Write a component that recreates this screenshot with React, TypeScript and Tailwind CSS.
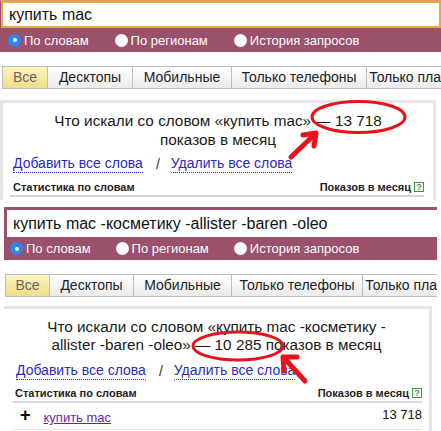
import React from 'react';

type Tab = { label: string; w: string; active?: boolean };

const tabsTop: Tab[] = [
  { label: 'Все', w: 'w-[46px]', active: true },
  { label: 'Десктопы', w: 'w-[85px]' },
  { label: 'Мобильные', w: 'w-[99px]' },
  { label: 'Только телефоны', w: 'w-[135px]' },
  { label: 'Только планшеты', w: 'w-[120px]' },
];

const tabsBottom: Tab[] = [
  { label: 'Все', w: 'w-[45px]', active: true },
  { label: 'Десктопы', w: 'w-[84px]' },
  { label: 'Мобильные', w: 'w-[98px]' },
  { label: 'Только телефоны', w: 'w-[131px]' },
  { label: 'Только планшеты', w: 'w-[120px]' },
];

const Radio = ({ checked, label }: { checked?: boolean; label: string }) => (
  <div className="flex items-center">
    {checked ? (
      <span className="w-[13px] h-[13px] rounded-full bg-[#2f86f0] flex items-center justify-center">
        <span className="w-[4px] h-[4px] rounded-full bg-white" />
      </span>
    ) : (
      <span className="w-[13px] h-[13px] rounded-full bg-white" />
    )}
    <span className="ml-[3px] text-[13px] leading-[15px] text-white">{label}</span>
  </div>
);

const Tabs = ({ tabs, wrap }: { tabs: Tab[]; wrap: string }) => (
  <div className={`flex h-[23px] overflow-hidden ${wrap}`}>
    {tabs.map((t, i) => (
      <div
        key={t.label}
        className={`${t.w} shrink-0 h-full flex items-center justify-center whitespace-nowrap text-[14px] border-y border-r border-[#bdbdbd] ${
          i === 0 ? 'border-l' : ''
        } ${
          t.active
            ? 'bg-gradient-to-b from-[#fdf3c0] to-[#f3dc84] text-[#666]'
            : 'bg-gradient-to-b from-white to-[#ebebeb] text-[#222]'
        }`}
      >
        {t.label}
      </div>
    ))}
  </div>
);

const Help = () => (
  <span className="ml-[3px] w-[10px] h-[10px] border border-[#3c9a3c] flex items-center justify-center text-[9px] leading-none font-bold text-[#3c9a3c]">
    ?
  </span>
);

const Links = ({ wrap }: { wrap: string }) => (
  <div className={`flex items-center text-[14px] leading-[17px] ${wrap}`}>
    <span className="text-[#2a2ac2] border-b border-dotted border-[#2a2ac2]">Добавить все слова</span>
    <span className="ml-[13px] mr-[11px] text-[#333]">/</span>
    <span className="text-[#2a2ac2] border-b border-dotted border-[#2a2ac2]">Удалить все слова</span>
  </div>
);

const StatsHead = ({ wrap, line }: { wrap: string; line: string }) => (
  <div className={`flex items-center justify-between text-[11px] leading-[14px] font-bold text-[#222] ${wrap} ${line}`}>
    <span>Статистика по словам</span>
    <span className="flex items-center">
      Показов в месяц
      <Help />
    </span>
  </div>
);

export default function App() {
  return (
    <div className="relative w-[441px] h-[431px] overflow-hidden bg-white font-['Liberation_Sans',Arial,sans-serif]">
      {/* first screenshot */}
      <div className="h-[52px] bg-[#9b506b] border-t border-[#d9a067]">
        <div className="ml-[1px] h-[27px] border-2 border-[#eaa845] bg-white flex items-center pl-[6px] text-[16px] text-[#111]">
          купить mac
        </div>
        <div className="h-[24px] flex items-center pl-[8px] gap-[26px]">
          <Radio checked label="По словам" />
          <Radio label="По регионам" />
          <Radio label="История запросов" />
        </div>
      </div>

      <Tabs tabs={tabsTop} wrap="mt-[14px] ml-[2px]" />

      <div className="mt-[11px] w-[436px] h-[100px] border-t-[3px] border-x-[3px] border-[#e6e6e6]">
        <div className="pt-[8px] text-center text-[15.3px] leading-[19px] text-[#1a1a1a] whitespace-nowrap">
          <div>Что искали со словом «купить mac» — 13 718</div>
          <div>показов в месяц</div>
        </div>
        <Links wrap="mt-[6px] pl-[10px]" />
        <StatsHead wrap="mt-[7px] ml-[7px] mr-[9px] pl-[3px]" line="pb-[1px] border-b-2 border-[#d6d6d6]" />
      </div>

      {/* second screenshot */}
      <div className="mt-[7px] ml-[4px] w-[433px] h-[53px] bg-[#9b506b] pt-[3px] pl-[3px]">
        <div className="h-[27px] bg-white flex items-center pl-[6px] text-[16px] text-[#111] whitespace-nowrap">
          купить mac -косметику -allister -baren -oleo
        </div>
        <div className="h-[23px] flex items-center pl-[3px] gap-[25px]">
          <Radio checked label="По словам" />
          <Radio label="По регионам" />
          <Radio label="История запросов" />
        </div>
      </div>

      <Tabs tabs={tabsBottom} wrap="mt-[14px] ml-[5px] w-[432px]" />

      <div className="mt-[9px] ml-[4px] w-[428px] h-[130px] border-t-[3px] border-r-[3px] border-[#e6e6e6]">
        <div className="pt-[9px] text-center text-[15.3px] leading-[18px] text-[#1a1a1a] whitespace-nowrap">
          <div>Что искали со словом «купить mac -косметику -</div>
          <div>allister -baren -oleo» — 10 285 показов в месяц</div>
        </div>
        <Links wrap="mt-[8px] pl-[12px]" />
        <StatsHead wrap="mt-[6px] ml-[9px] mr-[7px] pl-[2px]" line="pb-[1px] border-b-2 border-[#dcd4e4]" />
        <div className="ml-[9px] mr-[7px] h-[27px] border-b border-[#e4e4e4] flex items-start justify-between">
          <div className="flex items-start pt-[5px]">
            <span className="ml-[7px] text-[18px] leading-[14px] font-bold text-black">+</span>
            <span className="ml-[13px] mt-[2px] text-[13px] leading-[15px] text-[#6a1f9e] underline">купить mac</span>
          </div>
          <span className="pt-[4px] text-[13px] leading-[15px] text-[#111]">13 718</span>
        </div>
      </div>

      {/* red marks drawn over the screenshot */}
      <svg className="absolute left-0 top-0 pointer-events-none" width="441" height="431" viewBox="0 0 441 431">
        <g fill="none" stroke="#e8121c" strokeLinecap="round" strokeLinejoin="round">
          <ellipse cx="358.5" cy="117" rx="46.5" ry="15.5" strokeWidth="3" />
          <line x1="291" y1="157" x2="314" y2="135" strokeWidth="5" />
          <polyline points="303,135 316,133 314,146" strokeWidth="5" />
          <ellipse cx="238" cy="346" rx="45" ry="14" strokeWidth="3" />
          <line x1="305" y1="381" x2="285" y2="359" strokeWidth="5" />
          <polyline points="284,371 283,357 297,357" strokeWidth="5" />
        </g>
      </svg>
    </div>
  );
}
